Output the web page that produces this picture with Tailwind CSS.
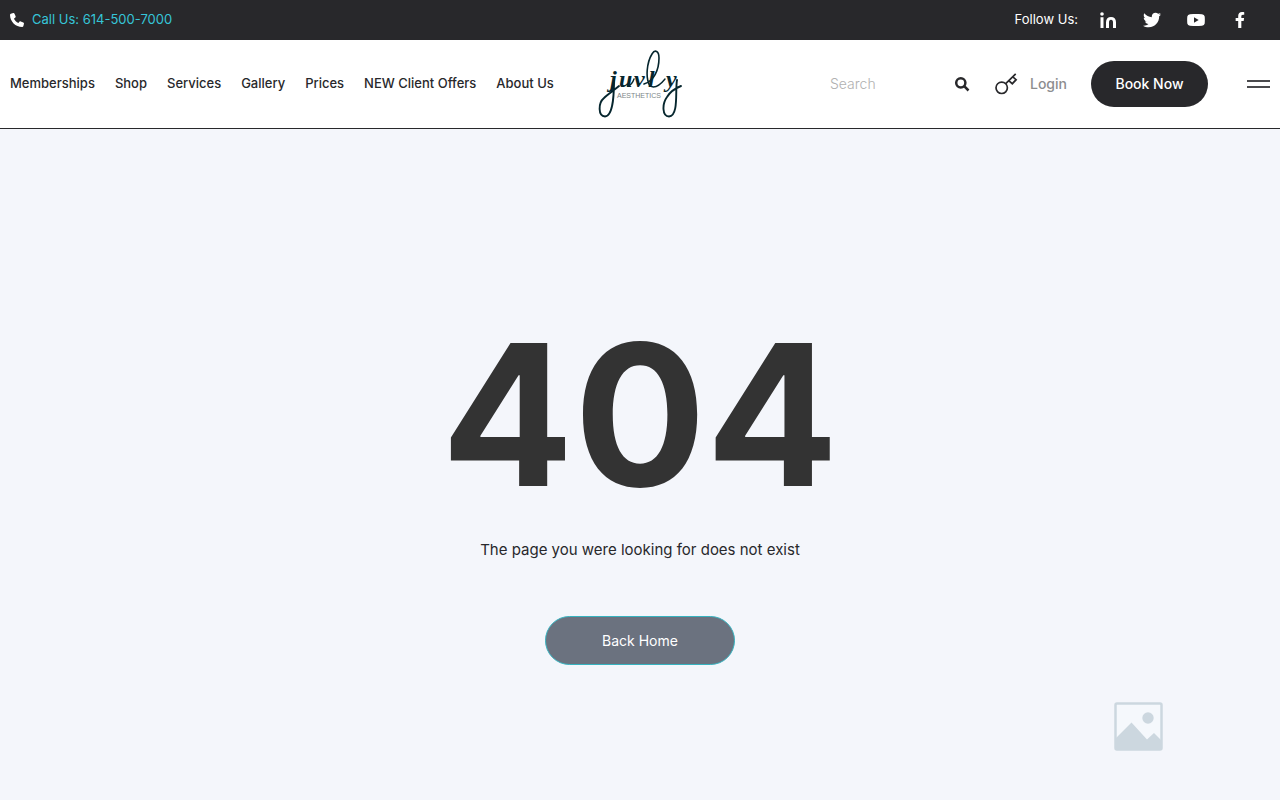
<!DOCTYPE html>
<html lang="en">
<head>
  <meta charset="UTF-8" />
  <title>404 - Juvly Aesthetics</title>
  <meta name="viewport" content="width=device-width, initial-scale=1.0" />
  <script src="https://cdn.jsdelivr.net/npm/@tailwindcss/browser@4"></script>
</head>
<body class="min-h-screen flex flex-col bg-[#f4f6fb] font-['Inter',sans-serif] text-[#28282b]">
  <!-- Top bar -->
  <div class="h-10 px-2.5 flex items-center justify-between bg-[#28282b] text-white text-[13px]">
    <a href="tel:6145007000" class="flex items-center gap-2 text-[#36c5d8]">
      <svg class="size-3.5 text-white" viewBox="0 0 512 512" fill="currentColor" aria-hidden="true">
        <path d="M164.900 24.600c-7.700-18.600-28-28.500-47.400-23.200l-88 24C12.100 30.200 0 46 0 64c0 247.400 200.600 448 448 448 18 0 33.800-12.100 38.600-29.500l24-88c5.300-19.400-4.600-39.700-23.200-47.400l-96-40c-16.300-6.800-35.200-2.100-46.300 11.600L304.700 368C234.300 334.700 177.300 277.700 144 207.300l49.300-40.300c13.700-11.200 18.400-30 11.600-46.300l-40-96z"/>
      </svg>
      <span>Call Us: 614-500-7000</span>
    </a>
    <div class="flex items-center">
      <span class="mr-5">Follow Us:</span>
      <div class="flex items-center gap-6 mr-5">
        <a href="#" aria-label="LinkedIn" class="size-5 flex items-center justify-center">
          <svg class="size-4" viewBox="0 0 16 16" fill="currentColor" aria-hidden="true">
            <circle cx="2" cy="2" r="1.800"/>
            <path d="M.500 5.300h3V16h-3zM6 16V10.300C6 6.800 8 5 11 5s5 1.800 5 5.300V16h-3v-5.500c0-1.700-.6-2.700-2-2.700s-2 1-2 2.700V16z"/>
          </svg>
        </a>
        <a href="#" aria-label="Twitter" class="size-5 flex items-center justify-center">
          <svg class="size-4.5" viewBox="0 0 512 512" fill="currentColor" aria-hidden="true">
            <path d="M459.400 151.700c.3 4.500.3 9.100.3 13.600 0 138.700-105.600 298.600-298.600 298.600-59.500 0-114.700-17.200-161.100-47.100 8.400 1 16.600 1.300 25.300 1.300 49.100 0 94.200-16.600 130.300-44.800-46.100-1-84.800-31.200-98.100-72.800 6.500 1 13 1.600 19.800 1.600 9.400 0 18.800-1.300 27.600-3.600-48.100-9.700-84.100-52-84.100-103v-1.300c14 7.800 30.200 12.700 47.400 13.300-28.300-18.800-46.800-51-46.800-87.400 0-19.500 5.200-37.400 14.300-53 51.700 63.700 129.300 105.300 216.400 109.800-1.600-7.800-2.600-15.900-2.600-24 0-57.800 46.800-104.900 104.900-104.900 30.200 0 57.500 12.700 76.700 33.100 23.700-4.500 46.500-13.300 66.600-25.300-7.800 24.400-24.400 44.800-46.100 57.800 21.100-2.300 41.600-8.100 60.400-16.200-14.300 20.800-32.200 39.300-52.600 54.300z"/>
          </svg>
        </a>
        <a href="#" aria-label="YouTube" class="size-5 flex items-center justify-center">
          <svg class="w-4.5 h-3" viewBox="0 0 18 12" fill="currentColor" aria-hidden="true">
            <path fill-rule="evenodd" d="M3 .200Q9-.300 15 .200 17.400.400 17.700 2.500 18 6 17.700 9.500 17.400 11.600 15 11.800 9 12.300 3 11.800.600 11.600.300 9.500 0 6 .300 2.500.600.400 3 .200zM7 3.300v5.400L11.700 6z"/>
          </svg>
        </a>
        <a href="#" aria-label="Facebook" class="size-5 flex items-center justify-center">
          <svg class="h-4 w-2.5" viewBox="22 0 280 512" fill="currentColor" aria-hidden="true">
            <path d="M279.100 288l14.200-92.700h-88.900v-60.100c0-25.400 12.400-50.100 52.200-50.100H297V6.300S260.400 0 225.400 0c-73.200 0-121.100 44.400-121.100 124.700v70.600H22.900V288h81.400v224h100.200V288z"/>
          </svg>
        </a>
      </div>
    </div>
  </div>

  <!-- Header -->
  <header class="h-[89px] px-2.5 grid grid-cols-[1fr_84px_1fr] items-center bg-white border-b border-[#28282b]">
    <nav class="flex items-center gap-5 text-[13px] font-medium whitespace-nowrap">
      <a href="#">Memberships</a>
      <a href="#">Shop</a>
      <a href="#">Services</a>
      <a href="#">Gallery</a>
      <a href="#">Prices</a>
      <a href="#">NEW Client Offers</a>
      <a href="#">About Us</a>
    </nav>

    <a href="/" aria-label="Juvly Aesthetics">
      <svg class="w-[84px] h-[68px]" viewBox="8 8 84 68" fill="none" stroke="#06262e" stroke-linecap="round" aria-hidden="true">
        <!-- Flourishes -->
        <path stroke-width="1.900" d="M24 37C24 48 24 74 15 74.500C8 74 8 61 14 56C18 52 23 49 29 44"/>
        <path stroke-width="1.600" d="M60 44C55 36 57 20 62 12C65 7 69 9 69 16C69 28 64 39 54 42"/>
        <path stroke-width="1.900" d="M87 38C85 48 89 74 79 74.500C72 74 72 62 77 55C80 50 86 46 91 44"/>
        <path stroke-width="1.400" d="M60 44C65 47 71 42 75 37M38 44C41 43 43 40 44 37"/>
        <text x="20 29 44 58 76" y="45" fill="#06262e" stroke="none" font-family="Liberation Serif, serif" font-style="italic" font-weight="700" font-size="24">juvly</text>
        <text x="27" y="56" fill="#7d8688" stroke="none" font-family="Liberation Sans Narrow, Liberation Sans, sans-serif" font-size="7">AESTHETICS</text>
      </svg>
    </a>

    <div class="flex items-center justify-end">
      <form class="flex items-center mr-6">
        <input type="search" aria-label="Search" placeholder="Search" class="w-[124px] text-sm font-light outline-none placeholder:text-[#b1b1b1]" />
        <button type="submit" aria-label="Search">
          <svg class="size-4" viewBox="0 0 16 16" fill="none" stroke="currentColor" stroke-width="2.500" aria-hidden="true">
            <circle cx="6.800" cy="6.800" r="4.600"/>
            <path d="m10.200 10.200 4.300 4.300"/>
          </svg>
        </button>
      </form>
      <a href="#" class="flex items-center gap-3 mr-6 text-sm font-medium text-[#8d8d8f]">
        <svg class="size-6 text-[#28282b]" viewBox="0 0 24 24" fill="none" stroke="currentColor" stroke-width="1.700" aria-hidden="true">
          <circle cx="7.700" cy="15.800" r="5.700"/>
          <path d="M11.700 11.700 21.700 1.800M15 8.800l3.300 2.900 3.800-4-3.300-2.800"/>
        </svg>
        Login
      </a>
      <a href="#" class="w-[117px] h-[46px] flex items-center justify-center rounded-full bg-[#28282b] text-sm font-medium text-white mr-[39px]">Book Now</a>
      <button type="button" aria-label="Menu" class="w-[23px] h-2 border-y-2 border-[#4a4a4d]"></button>
    </div>
  </header>

  <!-- Not found -->
  <main class="flex-1 flex flex-col items-center pt-[186px] pb-8">
    <h1 class="text-[196px] leading-[200px] font-bold text-[#333333]">404</h1>
    <p class="mt-[23px] text-[15px] leading-6">The page you were looking for does not exist</p>
    <a href="/" class="mt-[54px] w-[190px] h-[49px] flex items-center justify-center rounded-full border border-[#36b3c0] bg-[#6b727f] text-sm text-white">Back Home</a>
  </main>

  <!-- Floating widget -->
  <div class="fixed right-29 bottom-12">
    <svg class="size-[50px]" viewBox="0 0 50 50" fill="#ccd7df" role="img" aria-label="Image placeholder">
      <rect x="1.500" y="1.500" width="46" height="46" rx="1.500" fill="#f5f8fc" stroke="#ccd7df" stroke-width="2.500"/>
      <circle cx="34" cy="16" r="5.700"/>
      <path d="M2 36 17.500 20.500 33 37.500l7-6.500 8 8v9H2z"/>
    </svg>
  </div>
</body>
</html>
